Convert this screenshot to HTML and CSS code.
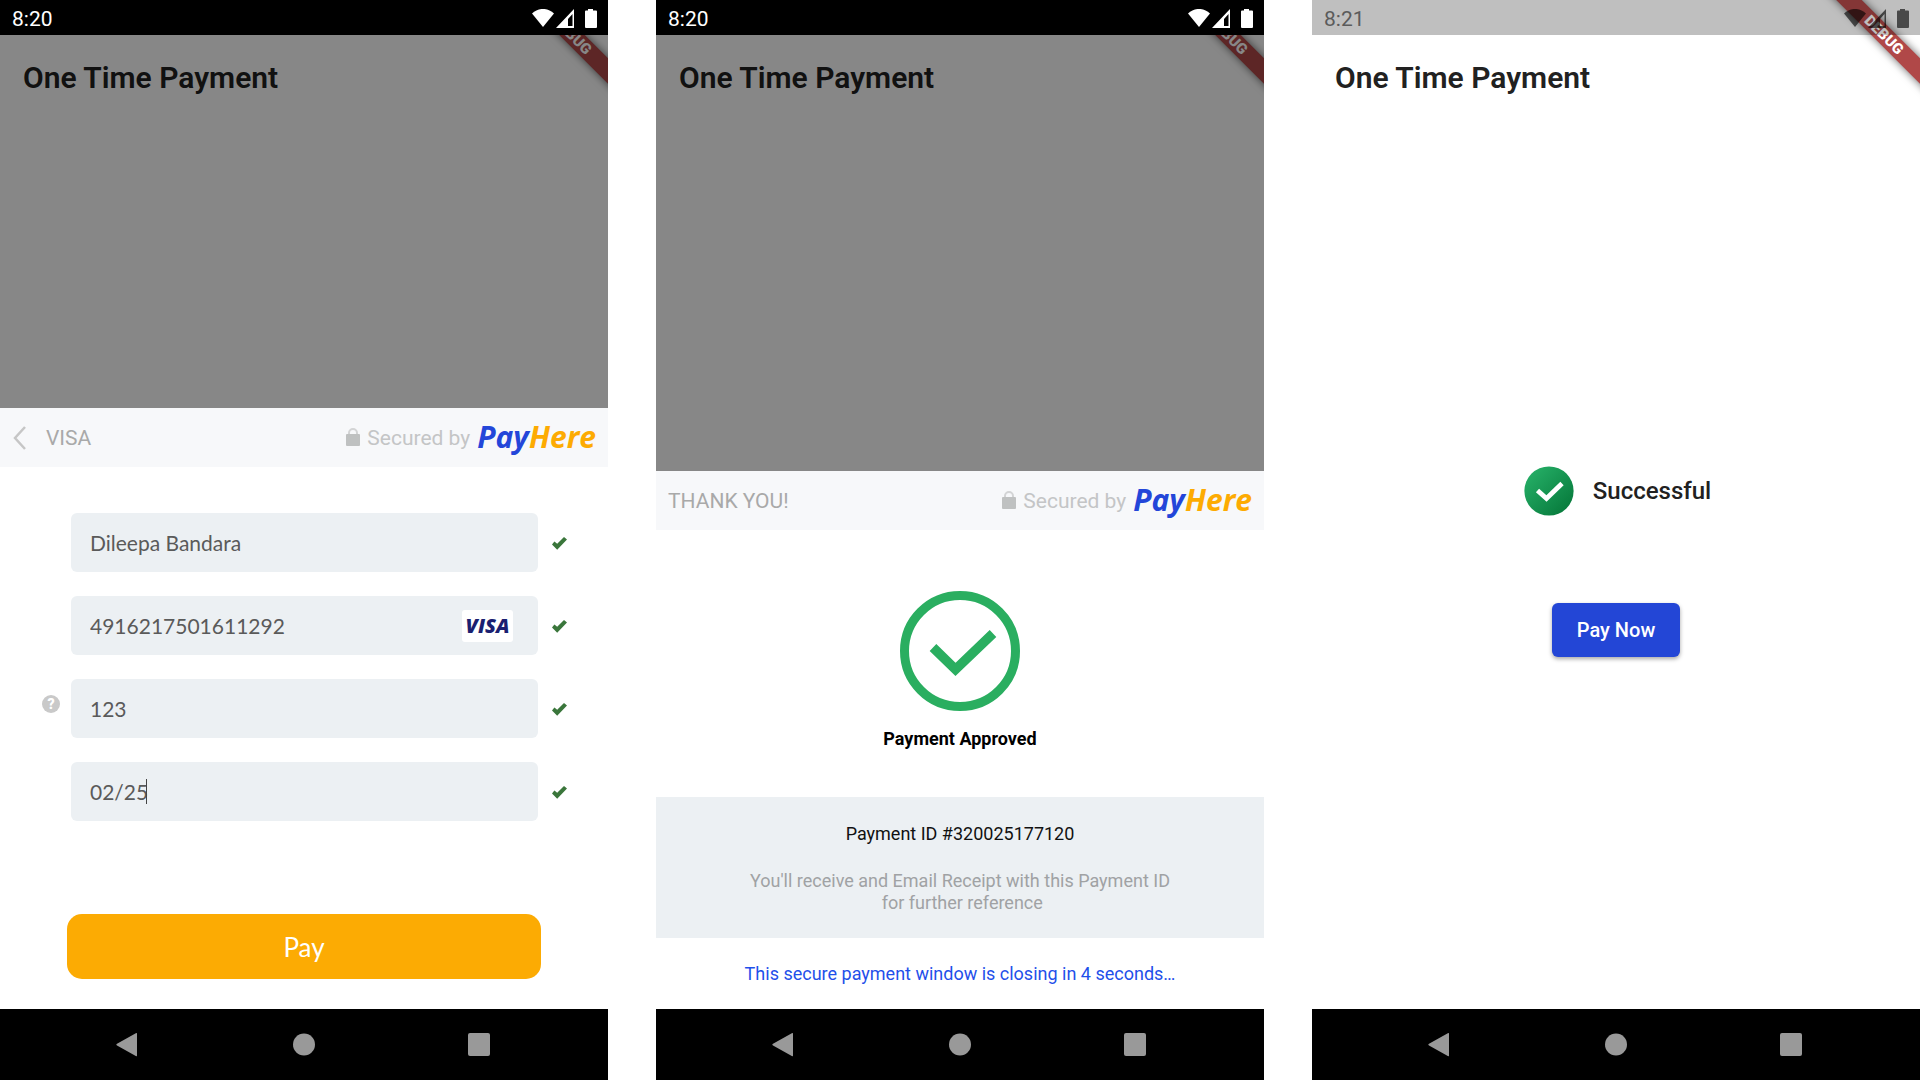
FILE: index.html
```html
<!DOCTYPE html>
<html lang="en">
<head>
<meta charset="utf-8">
<meta name="viewport" content="width=device-width, initial-scale=1">
<title>One Time Payment</title>
<link rel="stylesheet" href="styles.css">
</head>
<body>
<svg class="defs" width="0" height="0" aria-hidden="true">
  <symbol id="status-icons" viewBox="0 0 66 20">
    <path d="M1 4.500C7-1.600 17-1.600 23 4.500L12 18z"/>
    <path fill-rule="evenodd" d="M43 0V19H25zM41.500 5L37 10V17H41.500z"/>
    <path d="M57 0h5v1.500h3a1 1 0 0 1 1 1v15.500a1 1 0 0 1-1 1h-10a1 1 0 0 1-1-1V2.500a1 1 0 0 1 1-1h2z"/>
  </symbol>
  <symbol id="lock" viewBox="0 0 14 19">
    <path d="M3 9V5a4 4 0 0 1 8 0v4" fill="none" stroke="#d3d4d5" stroke-width="2"/>
    <rect y="6" width="14" height="12" rx="1" fill="#bfc1c1"/>
  </symbol>
  <symbol id="tick" viewBox="0 0 15 13">
    <path d="M0 7.500L2.400 4.600L5.200 6.800L12 0L15 2.600L5.200 12.800z" fill="#3a763b"/>
  </symbol>
  <symbol id="nav-back" viewBox="0 0 24 24"><path d="M21 1V22.500Q21 23.700 19.800 23L1 12.500Q-.400 11.500 1 10.700L19.800.200Q21-.500 21 1z"/></symbol>
  <symbol id="nav-home" viewBox="0 0 24 24"><circle cx="12" cy="11.500" r="11"/></symbol>
  <symbol id="nav-recent" viewBox="0 0 24 24"><rect x="0" y="0" width="22" height="23" rx="2"/></symbol>
</svg>

<main class="screens">
  <section class="phone phone-dimmed" aria-label="Card details">
    <div class="status"><span>8:20</span><svg width="66" height="20"><use href="#status-icons"/></svg></div>
    <div class="ribbon-clip"><span class="ribbon">DEBUG</span></div>
    <header class="app-bar"><h1>One Time Payment</h1></header>
    <div class="scrim"></div>
    <form class="sheet">
      <div class="sheet-head">
        <button class="back" type="button" aria-label="Back"><svg width="13" height="24" viewBox="0 0 13 24"><path d="M12 1L2 12L12 23" fill="none" stroke="#c6c6c6" stroke-width="2.500"/></svg></button>
        <h2>VISA</h2>
        <div class="secured"><svg width="14" height="19"><use href="#lock"/></svg><span>Secured by</span><span class="brand">Pay<b>Here</b></span></div>
      </div>
      <div class="form-body">
        <div class="rows">
          <div class="row"><div class="field"><input type="text" aria-label="Name on card" value="Dileepa Bandara"></div><svg class="tick" width="15" height="13"><use href="#tick"/></svg></div>
          <div class="row"><div class="field"><input type="text" aria-label="Card number" value="4916217501611292"><span class="visa">VISA</span></div><svg class="tick" width="15" height="13"><use href="#tick"/></svg></div>
          <div class="row"><button class="help" type="button" aria-label="What is the security code?">?</button><div class="field"><input type="text" aria-label="Security code" value="123"></div><svg class="tick" width="15" height="13"><use href="#tick"/></svg></div>
          <div class="row"><div class="field"><input type="text" aria-label="Expiry date" value="02/25"><span class="caret"></span></div><svg class="tick" width="15" height="13"><use href="#tick"/></svg></div>
        </div>
        <button class="pay" type="button">Pay</button>
      </div>
    </form>
    <nav class="nav">
      <button type="button" aria-label="Back"><svg width="24" height="24"><use href="#nav-back"/></svg></button>
      <button type="button" aria-label="Home"><svg width="24" height="24"><use href="#nav-home"/></svg></button>
      <button type="button" aria-label="Recent apps"><svg width="24" height="24"><use href="#nav-recent"/></svg></button>
    </nav>
  </section>

  <section class="phone phone-dimmed" aria-label="Payment approved">
    <div class="status"><span>8:20</span><svg width="66" height="20"><use href="#status-icons"/></svg></div>
    <div class="ribbon-clip"><span class="ribbon">DEBUG</span></div>
    <header class="app-bar"><h1>One Time Payment</h1></header>
    <div class="scrim"></div>
    <div class="sheet">
      <div class="sheet-head">
        <h2>THANK YOU!</h2>
        <div class="secured"><svg width="14" height="19"><use href="#lock"/></svg><span>Secured by</span><span class="brand">Pay<b>Here</b></span></div>
      </div>
      <div class="approved">
        <svg width="120" height="120" viewBox="0 0 120 120" fill="none" stroke="#2aae60"><circle cx="60" cy="60" r="55.500" stroke-width="9"/><path d="M33 56.500L55.500 78.500L93 42.500" stroke-width="9.500"/></svg>
        <p>Payment Approved</p>
      </div>
      <div class="receipt">
        <p class="receipt-id">Payment ID #320025177120</p>
        <p class="receipt-note">You'll receive and Email Receipt with this Payment ID<br>&nbsp;for further reference</p>
      </div>
      <p class="closing">This secure payment window is closing in 4 seconds…</p>
    </div>
    <nav class="nav">
      <button type="button" aria-label="Back"><svg width="24" height="24"><use href="#nav-back"/></svg></button>
      <button type="button" aria-label="Home"><svg width="24" height="24"><use href="#nav-home"/></svg></button>
      <button type="button" aria-label="Recent apps"><svg width="24" height="24"><use href="#nav-recent"/></svg></button>
    </nav>
  </section>

  <section class="phone phone-plain" aria-label="Payment result">
    <div class="status"><span>8:21</span><svg width="66" height="20"><use href="#status-icons"/></svg></div>
    <div class="ribbon-clip"><span class="ribbon">DEBUG</span></div>
    <header class="app-bar"><h1>One Time Payment</h1></header>
    <div class="result">
      <div class="result-line">
        <svg width="50" height="50" viewBox="0 0 50 50"><defs><linearGradient id="success-fill" x1="0" y1="0" x2="1" y2="1"><stop offset=".1" stop-color="#25ae66"/><stop offset=".9" stop-color="#077a3c"/></linearGradient></defs><circle cx="25" cy="25" r="24.600" fill="url(#success-fill)"/><path d="M13.500 24.500L22.500 32.500L38 17.500" fill="none" stroke="#fff" stroke-width="4.800"/></svg>
        <span>Successful</span>
      </div>
      <button class="pay-now" type="button">Pay Now</button>
    </div>
    <nav class="nav">
      <button type="button" aria-label="Back"><svg width="24" height="24"><use href="#nav-back"/></svg></button>
      <button type="button" aria-label="Home"><svg width="24" height="24"><use href="#nav-home"/></svg></button>
      <button type="button" aria-label="Recent apps"><svg width="24" height="24"><use href="#nav-recent"/></svg></button>
    </nav>
  </section>
</main>
</body>
</html>
```
FILE: styles.css
```css
* { box-sizing: border-box; }
body { margin: 0; background: #fff; font-family: Roboto, "Liberation Sans", sans-serif; color: #212121; }
h1, h2, p { margin: 0; }
button { border: 0; padding: 0; background: none; font: inherit; cursor: pointer; }
svg { display: block; flex: none; }
.defs { position: absolute; }

.screens { display: grid; grid-template-columns: repeat(3, 1fr); gap: 48px; min-height: 100vh; }
.phone { position: relative; display: flex; flex-direction: column; background: #fff; overflow: hidden; }

.status { display: flex; align-items: center; justify-content: space-between; height: 35px; padding: 2px 11px 0 12px; font-size: 21px; line-height: 24px; z-index: 3; }
.phone-dimmed .status { background: #000; color: #fff; fill: #fff; }
.phone-plain .status { background: rgba(0, 0, 0, .25); color: #5b5b5b; fill: rgba(0, 0, 0, .62); }

.ribbon-clip { position: absolute; top: 0; right: 0; width: 120px; height: 120px; overflow: hidden; z-index: 1; }
.ribbon { position: absolute; top: 26px; right: -56px; width: 184px; height: 18px; background: #b04848; color: #fff; font-size: 15px; font-weight: 900; line-height: 18px; text-align: center; transform: rotate(45deg); box-shadow: 0 0 9px rgba(0, 0, 0, .6); }

.app-bar { height: 80px; padding: 25px 23px 0; }
.app-bar h1 { font-size: 30px; line-height: 36px; font-weight: 600; }
.scrim { position: absolute; inset: 0; background: rgba(0, 0, 0, .47); z-index: 2; }

.sheet { margin-top: auto; background: #fff; z-index: 3; }
.sheet-head { display: flex; align-items: center; height: 59px; padding: 0 12px; background: #f7f8fa; }
.sheet-head h2 { font-size: 21px; line-height: 24px; font-weight: 400; color: #a9a9a9; }
.back { padding: 0 20px 0 1px; }
.secured { display: flex; align-items: center; gap: 7px; margin-left: auto; font-size: 21px; line-height: 24px; color: #c4c5c6; }
.brand { padding-bottom: 2px; font-family: "Open Sans", sans-serif; font-size: 30px; line-height: 40px; font-weight: 700; font-style: italic; color: #2346d9; }
.brand b { font-weight: inherit; color: #fdab02; }

.form-body { padding: 46px 67px 30px; }
.rows { display: grid; gap: 24px; padding: 0 3px 0 4px; }
.row { position: relative; }
.field { position: relative; display: flex; align-items: center; height: 59px; padding: 0 25px 0 19px; border-radius: 6px; background: #ecf0f3; }
.field input { flex: 1; min-width: 0; padding: 0; border: 0; outline: 0; background: none; font: 21px/26px Lato, sans-serif; color: #5a5a5a; }
.visa { width: 51px; border-radius: 3px; background: #fff; color: #1a1f71; font-family: "Open Sans", sans-serif; font-size: 20px; line-height: 32px; font-weight: 800; font-style: italic; text-align: center; }
.caret { position: absolute; left: 75px; top: 17px; width: 1px; height: 25px; background: #444; }
.tick { position: absolute; left: calc(100% + 14px); top: 24px; }
.help { position: absolute; right: calc(100% + 11px); top: 16px; width: 18px; height: 18px; border-radius: 50%; background: #c9c9c9; color: #fff; font-size: 14px; line-height: 18px; font-weight: 900; }
.pay { display: block; width: 100%; height: 65px; margin-top: 93px; border-radius: 15px; background: #fcab03; color: #fff; font: 26px/32px Lato, sans-serif; }

.approved { display: flex; flex-direction: column; align-items: center; gap: 17px; padding: 61px 0 47px; font-size: 18px; line-height: 22px; font-weight: 700; color: #000; }
.receipt { display: grid; gap: 25px; padding: 26px 0 24px; background: #ecf0f3; font-size: 18px; line-height: 22px; text-align: center; }
.receipt-id { color: #111; }
.receipt-note { color: #a0a2a4; }
.closing { font-size: 18px; line-height: 71px; text-align: center; color: #1f50ea; }

.result { flex: 1; display: flex; flex-direction: column; align-items: center; justify-content: center; gap: 87px; padding-bottom: 2px; }
.result-line { display: flex; align-items: center; gap: 19px; padding-left: 3px; font-size: 24px; line-height: 30px; font-weight: 500; }
.pay-now { height: 54px; padding: 0 25px; border-radius: 6px; background: #2346d6; color: #fff; font-size: 20px; font-weight: 500; box-shadow: 0 2px 4px rgba(0, 0, 0, .35); }

.nav { display: flex; align-items: center; justify-content: center; gap: 152px; height: 71px; background: #000; fill: #999; z-index: 3; }
```
